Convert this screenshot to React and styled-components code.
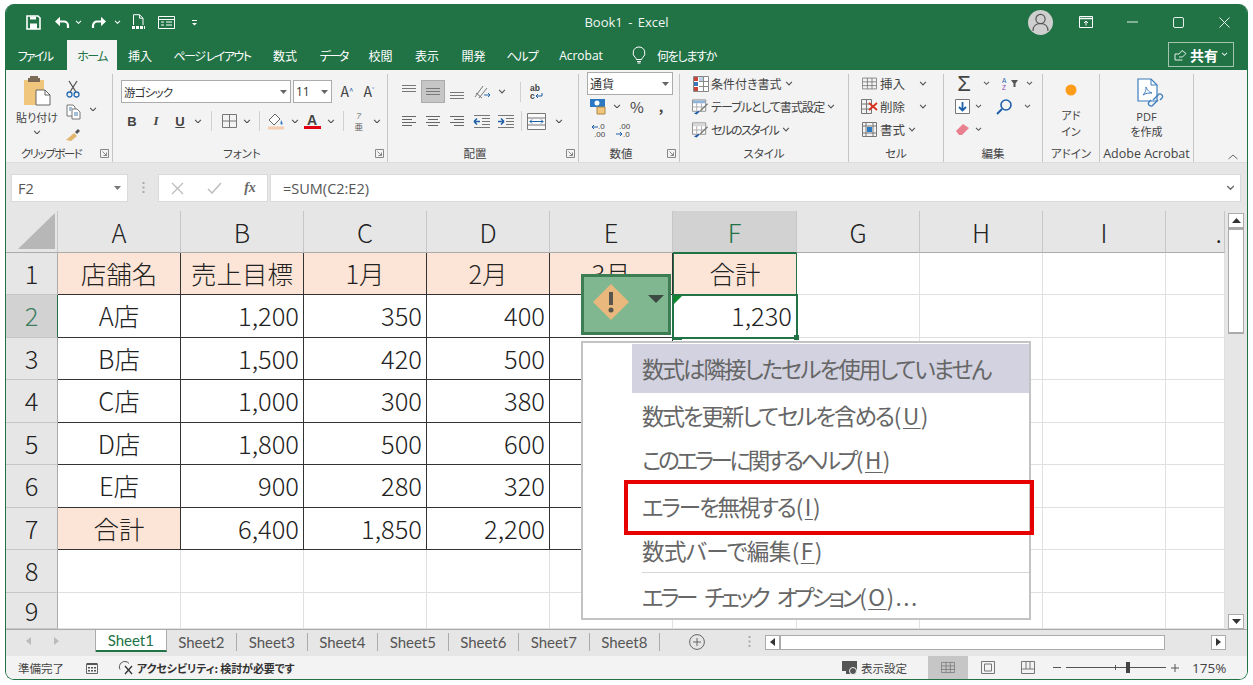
import React from "react";
import styled, { createGlobalStyle } from "styled-components";

const UI = `"Noto Sans CJK JP", "Noto Sans", sans-serif`;
const LATIN = `"Open Sans", "Noto Sans CJK JP", sans-serif`;

const Global = createGlobalStyle`
  html, body { margin: 0; padding: 0; background: #fff; }
  * { box-sizing: border-box; }
  body { font-family: ${UI}; font-feature-settings: "palt"; overflow: hidden; }
`;

const Window = styled.div`
  width: 1243px; height: 676px; margin: 4px 0 0 5px;
  border: 1px solid #217346; border-top: 0; border-radius: 9px;
  overflow: hidden; display: flex; flex-direction: column; background: #e6e6e6;
`;

/* ---- title bar ---- */
const TitleBar = styled.div`
  height: 36px; background: #217346; color: #fff; flex: none;
  display: grid; grid-template-columns: 1fr auto 1fr; align-items: center;
`;
const Qat = styled.div`display: flex; align-items: center; padding-left: 16px;`;
const Slot = styled.span`
  width: ${p => p.$w}px; flex: none; display: inline-flex; align-items: center; justify-content: center;
  height: ${p => p.$h || 22}px; margin-top: ${p => p.$mt || 0}px; margin-left: ${p => p.$ml || 0}px;
  color: ${p => p.$c || "#444"}; font-size: ${p => p.$fs || 13}px; font-weight: ${p => p.$fw || 400};
  background: ${p => p.$on ? "#c6c6c6" : "transparent"};
  border: ${p => p.$on ? "1px solid #ababab" : "0"};
`;
const DocTitle = styled.div`font: 400 13px ${LATIN}; color: #f0f6f2; word-spacing: 2px;`;
const WinCtrls = styled.div`display: flex; align-items: center; justify-content: flex-end;`;
const Avatar = styled.span`
  width: 25px; height: 25px; border-radius: 50%; background: #cfcfcf; display: flex;
  align-items: center; justify-content: center; margin-right: 10px;
`;

/* ---- tabs ---- */
const TabBar = styled.div`
  height: 30px; background: #217346; flex: none; display: flex; align-items: stretch; padding-left: 2px;
  position: relative;
`;
const Tab = styled.div`
  display: flex; align-items: center; justify-content: center; width: ${p => p.$w}px; flex: none;
  color: ${p => p.$on ? "#217346" : "#fff"}; background: ${p => p.$on ? "#f3f3f3" : "transparent"};
  font-size: 12px; margin-left: ${p => p.$ml || 0}px; letter-spacing: ${p => p.$ls || 0}px; white-space: nowrap;
  font-family: ${p => p.$latin ? LATIN : UI};
`;
const TellMe = styled.div`display: flex; align-items: center; color: #fff; font-size: 12px; gap: 11px; margin-left: 18px; letter-spacing: -1.3px;`;
const Share = styled.div`
  margin-left: auto; margin-right: 13px; margin-top: 2px; width: 66px; height: 25px;
  border: 1px solid #a3c4ae; display: flex; align-items: center; justify-content: center; gap: 3px;
  color: #fff; font-size: 14px; font-weight: 700;
`;

/* ---- ribbon ---- */
const Ribbon = styled.div`height: 92px; background: #f3f3f3; display: flex; flex: none; position: relative;`;
const Group = styled.div`
  width: ${p => p.$w}px; flex: none; height: 88px; margin-top: 4px;
  border-right: 1px solid #c6c6c6; display: flex; flex-direction: column;
`;
const GroupBody = styled.div`
  flex: 1; display: flex; flex-direction: column; margin-top: -4px; min-height: 0;
  padding: ${p => p.$pt || 0}px 0 0 ${p => p.$pl || 0}px; gap: ${p => p.$gap || 0}px;
`;
const GroupFoot = styled.div`
  height: 16px; display: flex; align-items: center; font-size: 11.5px; color: #444; flex: none;
  margin-bottom: 1px;
`;
const FootText = styled.span`
  flex: 1; text-align: center; white-space: nowrap; font-family: ${p => p.$latin ? LATIN : UI};
  letter-spacing: ${p => p.$ls || 0}px; font-size: ${p => p.$fs || 11.5}px;
`;
const Launcher = styled.span`width: 16px; flex: none; display: flex; justify-content: center;`;
const Row = styled.div`
  display: flex; align-items: center; height: ${p => p.$h || 23}px; flex: none; margin-left: ${p => p.$ml || 0}px;
`;
const Big = styled.div`
  display: flex; flex-direction: column; align-items: center; width: ${p => p.$w}px; font-size: 11px; color: #444;
  line-height: 16px; text-align: center; flex: none;
`;
const SmallCol = styled.div`display: flex; flex-direction: column; flex: none;`;
const Split = styled.div`display: flex; flex: 1;`;
const ComboBox = styled.div`
  width: ${p => p.$w}px; height: 23px; background: #fff; border: 1px solid #ababab; flex: none;
  display: flex; align-items: center; justify-content: space-between; padding: 0 3px 0 2px;
  margin-right: ${p => p.$mr || 0}px; color: #333; font-size: ${p => p.$fs || 11.5}px; letter-spacing: ${p => p.$ls || 0}px;
`;
const Sep = styled.span`width: 1px; height: ${p => p.$h || 20}px; background: #d0d0d0; flex: none; margin: 0 ${p => p.$m || 0}px;`;
const StyleText = styled.span`font-size: ${p => p.$fs || 12}px; color: #444; white-space: nowrap; margin-left: 2px; letter-spacing: ${p => p.$ls || 0}px;`;
const Collapse = styled.span`position: absolute; right: 9px; bottom: 2px; display: flex;`;

/* ---- formula bar ---- */
const FormulaBar = styled.div`
  height: 49px; flex: none; background: #e6e6e6; display: flex; align-items: flex-start;
  padding: 11px 6px 0 5px; border-top: 1px solid #dcdcdc;
`;
const NameBox = styled.div`
  width: 117px; height: 28px; background: #fff; border: 1px solid #dadada; display: flex; align-items: center;
  justify-content: space-between; padding: 0 6px; font: 400 14.5px ${LATIN}; color: #555;
`;
const Dots = styled.span`width: 30px; height: 28px; display: flex; align-items: center; justify-content: center; flex: none;`;
const FxBox = styled.div`
  width: 110px; height: 28px; background: #fff; border: 1px solid #dadada; display: flex; align-items: center;
  flex: none; margin-right: 2px;
`;
const FxText = styled.span`font: italic 700 14px "Liberation Serif", serif; color: #666;`;
const FormulaInput = styled.div`
  flex: 1; height: 28px; background: #fff; border: 1px solid #dadada; display: flex; align-items: center;
  justify-content: space-between; padding: 0 5px 0 12px; font: 400 14.5px ${LATIN}; color: #555;
`;

/* ---- sheet ---- */
const Sheet = styled.div`height: 419px; flex: none; display: flex; position: relative; background: #fff; border-bottom: 1px solid #ababab;`;
const CellGrid = styled.div`
  width: 1219px; flex: none; display: grid; overflow: hidden; background: #fff;
  grid-template-columns: 52px repeat(5, 123px) 124px repeat(3, 123px) 59px;
  grid-template-rows: 42px 42px 43px 42px 43px 42px 43px 42px 43px 36px;
  color: #222; font-size: 25.5px; font-weight: 300;
`;
const Corner = styled.div`
  background: #e6e6e6; border-right: 1px solid #c6c6c6; border-bottom: 1px solid #ababab;
  display: flex; align-items: flex-end; justify-content: flex-end; padding: 0 2px 3px 0;
`;
const ColHead = styled.div`
  background: ${p => p.$on ? "#d2d2d2" : "#e6e6e6"}; color: ${p => p.$on ? "#217346" : "#222"};
  border-right: 1px solid #c6c6c6; border-bottom: 1px ${p => p.$on ? "solid #217346" : "solid #ababab"};
  display: flex; align-items: center; justify-content: ${p => p.$end ? "flex-end" : "center"}; padding-right: ${p => p.$end ? 2 : 0}px;
`;
const RowHead = styled.div`
  background: ${p => p.$on ? "#d2d2d2" : "#e6e6e6"}; color: ${p => p.$on ? "#3f7f5f" : "#222"};
  border-right: 1px ${p => p.$on ? "solid #217346" : "solid #ababab"}; border-bottom: 1px solid #c6c6c6;
  display: flex; align-items: center; justify-content: center; padding-bottom: 3px;
`;
const Cell = styled.div`
  position: relative; display: flex; align-items: center; white-space: nowrap; padding-bottom: 3px;
  justify-content: ${p => p.$right ? "flex-end" : "center"}; padding-right: ${p => p.$right ? 4 : 0}px;
  background: ${p => p.$peach ? "#fce4d6" : "#fff"};
  border-right: 1px solid ${p => p.$dark ? "#333" : "#e0e0e0"};
  border-bottom: 1px solid ${p => p.$dark ? "#333" : "#e0e0e0"};
  ${p => p.$framed && "border: 1px solid #217346;"}
  ${p => p.$active && "outline: 2px solid #217346; outline-offset: -1px; z-index: 2;"}
`;
const ErrorMark = styled.span`
  position: absolute; left: 1px; top: 1px; width: 0; height: 0;
  border-top: 8px solid #108a2e; border-right: 8px solid transparent;
`;
const FillHandle = styled.span`
  position: absolute; right: -3px; bottom: -3px; width: 5px; height: 5px; background: #217346; border: 0;
`;
const AnchorMark = styled.span`
  position: absolute; left: -1px; bottom: -3px; width: 10px; height: 3px; background: #217346;
`;
const VScroll = styled.div`
  width: 22px; flex: none; background: #e6e6e6; display: flex; flex-direction: column; padding: 2px 3px 0 3px;
`;
const ScrollBtn = styled.div`
  width: ${p => p.$w || 16}px; height: ${p => p.$h || 15}px; background: #fff; border: 1px solid #ababab; flex: none;
  display: flex; align-items: center; justify-content: center; margin-top: ${p => p.$auto ? "auto" : 0};
  margin-left: ${p => p.$autoL ? "auto" : 0};
`;
const VThumb = styled.div`height: 106px; background: #fff; border: 1px solid #ababab; border-top-width: 2px; border-bottom-width: 2px; flex: none;`;

/* ---- overlays above the sheet ---- */
const SmartTag = styled.div`
  position: absolute; left: 575px; top: 63px; width: 90px; height: 61px; z-index: 5;
  background: #80b690; border: 3px solid #3c7d54; display: flex; align-items: center; padding: 0 0 6px 8px;
`;
const TagCaret = styled.span`
  margin-left: 18px; width: 0; height: 0; margin-top: -5px;
  border-left: 8px solid transparent; border-right: 8px solid transparent; border-top: 8px solid #3d4a42;
`;
const Menu = styled.div`
  position: absolute; left: 575px; top: 130px; width: 450px; height: 279px; z-index: 5; background: #fff;
  border: 2px solid #c3c3c3; padding-top: 1px; display: flex; flex-direction: column; color: #666;
  font-size: 22.5px; font-weight: 400;
`;
const MenuHead = styled.div`
  margin-left: 49px; height: 49px; background: #d2d2e0; display: flex; align-items: center; padding: 0 0 2px 10px; flex: none;
  letter-spacing: ${p => p.$ls || 0}px; white-space: nowrap;
`;
const MenuItem = styled.div`
  height: ${p => p.$h}px; margin-left: 59px; display: flex; align-items: center; flex: none; white-space: nowrap;
  letter-spacing: ${p => p.$ls || 0}px; padding-bottom: ${p => p.$pb || 0}px; word-spacing: ${p => p.$ws || 0}px;
`;
const MenuRule = styled.div`height: 1px; background: #d6d6d6; margin-left: 59px; flex: none;`;
const Access = styled.span`letter-spacing: 1.5px; margin-left: 1px;`;
const Key = styled.span`text-decoration: underline; text-underline-offset: 3px; text-decoration-thickness: 1px;`;
const RedBox = styled.div`
  position: absolute; left: 618px; top: 269px; width: 410px; height: 55px; border: 4px solid #e60000; z-index: 6;
`;

/* ---- sheet tabs ---- */
const TabsBar = styled.div`height: 26px; flex: none; background: #e6e6e6; display: flex; align-items: flex-start;`;
const SheetNav = styled.div`width: 90px; height: 22px; flex: none; display: flex; align-items: center; padding-left: 20px; gap: 23px; border-right: 1px solid #ababab;`;
const SheetTab = styled.div`
  width: 70.5px; height: ${p => p.$on ? 22 : 18}px; margin-top: ${p => p.$on ? 0 : 3}px; flex: none;
  display: flex; align-items: center; justify-content: center; font: 400 15px Lato, ${LATIN};
  color: ${p => p.$on ? "#217346" : "#555"}; background: ${p => p.$on ? "#fff" : "transparent"};
  border-right: 1px solid #ababab;
  border-bottom: ${p => p.$on ? "2px solid #217346" : "0"};
`;
const AddSheet = styled.span`width: 52px; height: 24px; flex: none; display: flex; align-items: center; justify-content: flex-end; padding-right: 7px;`;
const HDots = styled.span`width: 74px; height: 24px; flex: none; display: flex; align-items: center; justify-content: center;`;
const HScroll = styled.div`flex: 1; height: 24px; display: flex; align-items: center; padding: 0 21px 0 0; margin-left: -21px;`;
const HThumb = styled.div`width: 385px; height: 15px; background: #fff; border: 1px solid #ababab; flex: none;`;

/* ---- status bar ---- */
const StatusBar = styled.div`height: 23px; flex: 1; background: #f3f3f3; display: flex; align-items: center; padding-left: 12px; font-size: 11.5px; color: #444;`;
const A11y = styled.span`font-weight: 700; font-size: 11px; color: #333; margin-left: 3px; letter-spacing: -.1px;`;
const StatusRight = styled.div`margin-left: auto; display: flex; align-items: center; height: 100%; padding-right: 19px;`;
const SettingLabel = styled.span`margin: 0 21px 0 3px; font-size: 11.5px;`;
const ViewBtn = styled.span`
  width: 40px; height: 100%; display: flex; align-items: center; justify-content: center;
  background: ${p => p.$on ? "#c6c6c6" : "transparent"};
`;
const ZoomTrack = styled.span`width: 100px; height: 1px; background: #555; position: relative; display: block; margin: 0 4px;`;
const ZoomThumb = styled.span`position: absolute; left: 60px; top: -5px; width: 4px; height: 11px; background: #444;`;
const ZoomTick = styled.span`position: absolute; left: 49px; top: -2px; width: 1px; height: 5px; background: #555;`;
const Pct = styled.span`font: 400 13.5px ${LATIN}; color: #444; width: 36px; margin-left: 12px; white-space: nowrap;`;

/* ---- drawings ---- */
const Chev = ({ c = "#555", s = 8 }) => (
  <svg width={s} height={s * 0.6} viewBox="0 0 8 5"><path d="M1 1l3 3 3-3" stroke={c} strokeWidth="1.2" fill="none" /></svg>
);
const Launch = () => (
  <svg width="9" height="9" viewBox="0 0 9 9"><path d="M.5 8.500V.5h8v8z M2.500 2.500l4 4 M6.500 3.500v3h-3" stroke="#888" fill="none" /></svg>
);
const Lines = ({ kind = "center", c = "#666" }) => {
  const r = kind === "left" ? [[2, 16], [2, 12], [2, 16], [2, 12]] : kind === "right" ? [[2, 16], [6, 16], [2, 16], [6, 16]] : [[2, 16], [4, 14], [2, 16], [4, 14]];
  return <svg width="18" height="14" viewBox="0 0 18 14">{r.map((l, i) => <path key={i} d={`M${l[0]} ${2.5 + i * 3}H${l[1]}`} stroke={c} />)}</svg>;
};
const VLines = ({ y = 4 }) => (
  <svg width="18" height="16" viewBox="0 0 18 16">{[0, 1, 2].map(i => <path key={i} d={`M2 ${y + .5 + i * 3}H16`} stroke="#777" />)}</svg>
);
const Indent = ({ out }) => (
  <svg width="18" height="14" viewBox="0 0 18 14">
    <path d="M1 1.500H17M9 4.500H17M9 7.500H17M9 10.500H17M1 13.500H17" stroke="#777" />
    <path d={out ? "M1 7.500H7M1 7.500L4 4.500M1 7.500L4 10.500" : "M1 7.500H7M7 7.500L4 4.500M7 7.500L4 10.500"} stroke="#1f5fa8" strokeWidth="1.5" fill="none" />
  </svg>
);
const MiniGrid = ({ w = 18, h = 14, c = "#777" }) => (
  <svg width={w} height={h} viewBox="0 0 18 14"><path d="M.5.500h17v13H.5zM6.500.500v13M12 .500v13M.5 5h17M.5 9.500h17" stroke={c} fill="none" /></svg>
);
const CondFormat = () => (
  <svg width="16" height="16" viewBox="0 0 16 16"><path d="M.5.500h15v15H.5z" fill="#fff" stroke="#888" /><path d="M1 1h4v4H1z" fill="#c9453a" /><path d="M1 6h4v4H1z" fill="#3a78b8" /><path d="M1 11h4v4H1z" fill="#c9453a" /><path d="M6 1h4v4H6z" fill="#bcd3e8" /><path d="M6 5.500h9M6 10.500h9M10.500 1v14" stroke="#888" /></svg>
);
const TableFormat = ({ band }) => (
  <svg width="18" height="16" viewBox="0 0 18 16"><path d="M.5.500h14v12H.5z" fill="#fff" stroke="#888" /><path d="M1 1h13v3H1z" fill={band} /><path d="M.5 8h14M5 4v8M10 4v8" stroke="#aaa" /><path d="M17 5l-7 7-2 1 1-2 7-7z" fill="#7a7a7a" /><path d="M2 15l5-3 1 1-3 3z" fill="#1f5fa8" /></svg>
);
const Tiny = ({ w, h, children }) => (
  <svg width={w} height={h} viewBox={`0 0 ${w} ${h}`} overflow="visible" fontFamily="Liberation Sans" fontSize="8">{children}</svg>
);

/* ---- data ---- */
const LETTERS = ["A", "B", "C", "D", "E", "F", "G", "H", "I"];
const ROWS = [
  [["店舗名", 1], ["売上目標", 1], ["1月", 1], ["2月", 1], ["3月", 1]],
  [["A店"], ["1,200"], ["350"], ["400"], [""]],
  [["B店"], ["1,500"], ["420"], ["500"], [""]],
  [["C店"], ["1,000"], ["300"], ["380"], [""]],
  [["D店"], ["1,800"], ["500"], ["600"], [""]],
  [["E店"], ["900"], ["280"], ["320"], [""]],
  [["合計", 1], ["6,400"], ["1,850"], ["2,200"], [""]],
];
const TABS = [
  { t: "ファイル", w: 54, ls: -1.7 }, { t: "ホーム", w: 50, ml: 5, ls: -1.6, on: 1 }, { t: "挿入", w: 46 },
  { t: "ページ レイアウト", w: 98, ls: -1.5 }, { t: "数式", w: 48 }, { t: "データ", w: 49, ls: -2 },
  { t: "校閲", w: 45 }, { t: "表示", w: 48 }, { t: "開発", w: 45 }, { t: "ヘルプ", w: 52, ls: -1 },
];
const SHEETS = ["Sheet1", "Sheet2", "Sheet3", "Sheet4", "Sheet5", "Sheet6", "Sheet7", "Sheet8"];

export default function App() {
  return (
    <>
      <Global />
      <Window>
        <TitleBar>
          <Qat>
            <Slot $w={22}><svg width="15" height="15" viewBox="0 0 15 15"><path d="M1 1h11l2 2v11H1z" fill="none" stroke="#fff" strokeWidth="1.6" /><path d="M4 1.500h6v3H4z" fill="#fff" /><path d="M4 8.500h7v5.500H4z" fill="#fff" /></svg></Slot>
            <Slot $w={24} $ml={6}><svg width="16" height="13" viewBox="0 0 16 13"><path d="M3 5.500h7a4 4 0 0 1 4 4V12" stroke="#fff" strokeWidth="2.2" fill="none" /><path d="M6 .8L1 5.500l5 4.700z" fill="#fff" /></svg></Slot>
            <Slot $w={8}><Chev c="#fff" s={7} /></Slot>
            <Slot $w={24} $ml={5}><svg width="16" height="13" viewBox="0 0 16 13"><path d="M13 5.500H6a4 4 0 0 0-4 4V12" stroke="#fff" strokeWidth="2.2" fill="none" /><path d="M10 .8l5 4.700-5 4.700z" fill="#fff" /></svg></Slot>
            <Slot $w={12}><Chev c="#fff" s={7} /></Slot>
            <Slot $w={24} $ml={3}><svg width="15" height="16" viewBox="0 0 15 16"><path d="M2.500 11V.7h6l3.500 3.500V11M8.500.7v3.500H12" stroke="#fff" fill="none" /><path d="M1 13.500h13" stroke="#fff" strokeWidth="3" strokeDasharray="3 1" /></svg></Slot>
            <Slot $w={28} $ml={2}><svg width="17" height="13" viewBox="0 0 17 13"><path d="M.5.500h16v12H.5zM.5 3.500h16M3 6h3M3 9h3M8 6h6M8 9h6" stroke="#fff" fill="none" /></svg></Slot>
            <Slot $w={28}><svg width="7" height="7" viewBox="0 0 7 7"><path d="M1 1.500h5" stroke="#fff" /><path d="M1 4h5L3.500 6.500z" fill="#fff" /></svg></Slot>
          </Qat>
          <DocTitle>Book1 - Excel</DocTitle>
          <WinCtrls>
            <Avatar><svg width="17" height="19" viewBox="0 0 17 19"><circle cx="8.500" cy="6" r="4.600" fill="none" stroke="#555" strokeWidth="1.2" /><path d="M1 18c0-5 3-7.500 7.500-7.500S16 13 16 18" fill="none" stroke="#555" strokeWidth="1.2" /></svg></Avatar>
            <Slot $w={46}><svg width="14" height="12" viewBox="0 0 14 12"><path d="M.5.500h13v11H.5z" fill="none" stroke="#fff" /><path d="M.5 2.500h13" stroke="#fff" strokeWidth="1.5" /><path d="M7 9.500V5M5 7l2-2 2 2" fill="none" stroke="#fff" /></svg></Slot>
            <Slot $w={46}><svg width="11" height="2" viewBox="0 0 11 2"><path d="M0 1h11" stroke="#e6f0ea" /></svg></Slot>
            <Slot $w={46}><svg width="11" height="11" viewBox="0 0 11 11"><rect x=".5" y=".5" width="10" height="10" rx="1.5" fill="none" stroke="#e6f0ea" /></svg></Slot>
            <Slot $w={46}><svg width="11" height="11" viewBox="0 0 11 11"><path d="M.5.500l10 10M10.500.500l-10 10" stroke="#e6f0ea" /></svg></Slot>
          </WinCtrls>
        </TitleBar>

        <TabBar>
          {TABS.map(({ t, w, ml, ls, on }) => <Tab key={t} $w={w} $ml={ml} $ls={ls} $on={on}>{t}</Tab>)}
          <Tab $w={66} $latin>Acrobat</Tab>
          <TellMe>
            <svg width="14" height="18" viewBox="0 0 14 18"><path d="M7 1a6 6 0 0 0-3.500 10.800c.6.500.8 1.200.8 1.700h5.400c0-.5.200-1.200.8-1.700A6 6 0 0 0 7 1zM5 15.500h4M5.500 17h3" fill="none" stroke="#fff" /></svg>
            <span>何をしますか</span>
          </TellMe>
          <Share>
            <svg width="13" height="12" viewBox="0 0 13 12"><path d="M1 11V5h4l3-3.500 4 3L8.500 8H5M1 11h7.500" fill="none" stroke="#dfeee5" /></svg>
            <span>共有</span>
            <Chev c="#dfeee5" s={7} />
          </Share>
        </TabBar>

        <Ribbon>
          <Group $w={107}>
            <GroupBody $pt={5} $pl={8}>
              <Split>
                <Big $w={46}>
                  <svg width="28" height="31" viewBox="0 0 28 31"><path d="M1 5h20v25H1z" fill="#f0c67c" /><path d="M7 3h8V1h-8zM5 3h12v4H5z" fill="#7b6a55" /><path d="M13 15h9l5 5v10H13z" fill="#fff" stroke="#666" /><path d="M22 15v5h5" fill="none" stroke="#666" /></svg>
                  <span style={{ marginTop: 3 }}>貼り付け</span>
                  <Slot $w={12} $h={14}><Chev /></Slot>
                </Big>
                <SmallCol>
                  <Slot $w={26} $h={24} $mt={2}><svg width="14" height="18" viewBox="0 0 14 18"><path d="M3 1l7 11M11 1L4 12" stroke="#555" strokeWidth="1.3" /><circle cx="3.500" cy="14.500" r="2.500" fill="none" stroke="#2a6db0" strokeWidth="1.3" /><circle cx="10.500" cy="14.500" r="2.500" fill="none" stroke="#2a6db0" strokeWidth="1.3" /></svg></Slot>
                  <Slot $w={26} $h={22}><svg width="15" height="16" viewBox="0 0 15 16"><path d="M1 1h6l2 2v9H1z" fill="#fff" stroke="#777" /><path d="M6 5h5l3 3v7H6z" fill="#fff" stroke="#777" /><path d="M8 9h4M8 11h4M3 4h3M3 6h2" stroke="#4a7db0" /></svg></Slot>
                  <Slot $w={26} $h={22}><svg width="17" height="15" viewBox="0 0 17 15"><path d="M1 13L9 6l3 3-6 5z" fill="#e2b56c" /><path d="M10 5l3-3 2 2-3 3z" fill="#555" /></svg></Slot>
                </SmallCol>
                <Slot $w={14} $h={20} $mt={24}><Chev /></Slot>
              </Split>
            </GroupBody>
            <GroupFoot><FootText $ls={-1.5}>クリップボード</FootText><Launcher><Launch /></Launcher></GroupFoot>
          </Group>

          <Group $w={275}>
            <GroupBody $pt={10} $pl={8} $gap={7}>
              <Row $h={23}>
                <ComboBox $w={170} $mr={2} $ls={-0.8}><span>游ゴシック</span><svg width="7" height="4" viewBox="0 0 7 4"><path d="M0 0h7L3.500 4z" fill="#666" /></svg></ComboBox>
                <ComboBox $w={39} $fs={12}><span style={{ fontFamily: LATIN }}>11</span><svg width="7" height="4" viewBox="0 0 7 4"><path d="M0 0h7L3.500 4z" fill="#666" /></svg></ComboBox>
                <Slot $w={30} $fs={14} $mt={-2}>A<sup style={{ fontSize: 8, color: "#1f5fa8" }}>^</sup></Slot>
                <Slot $w={14} $fs={14} $mt={-2}>A<sup style={{ fontSize: 8, color: "#1f5fa8" }}>˅</sup></Slot>
              </Row>
              <Row $h={22} $ml={-1}>
                <Slot $w={24} $fs={13} $fw={700} $c="#444" style={{ fontFamily: "'Liberation Sans'" }}>B</Slot>
                <Slot $w={24} $fs={13} $fw={700} style={{ fontFamily: "'Liberation Serif'", fontStyle: "italic" }}>I</Slot>
                <Slot $w={24} $fs={13} $fw={700} style={{ fontFamily: "'Liberation Sans'", textDecoration: "underline" }}>U</Slot>
                <Slot $w={12}><Chev /></Slot>
                <Sep $m={7} />
                <Slot $w={20}><svg width="15" height="14" viewBox="0 0 15 14"><path d="M.5.500h14v13H.5zM7.500.500v13M.5 7h14" stroke="#777" fill="none" /></svg></Slot>
                <Slot $w={16}><Chev /></Slot>
                <Sep $m={4} />
                <Slot $w={24}><svg width="18" height="18" viewBox="0 0 18 18"><path d="M8 2L2 8l5 5 6-6z" fill="#fff" stroke="#666" /><path d="M14 8c1 2 2 3 1.500 4s-2 .5-2-.5.5-2.500.5-3.500z" fill="#2a79c2" /><path d="M1 16h16" stroke="#f6cdb0" strokeWidth="3" /></svg></Slot>
                <Slot $w={14}><Chev /></Slot>
                <Slot $w={20} $h={20} $fs={14} $fw={700} style={{ flexDirection: "column", lineHeight: "12px", fontFamily: "'Liberation Sans'" }}>A<svg width="17" height="3" viewBox="0 0 17 3"><path d="M0 1.500h17" stroke="#e00012" strokeWidth="3" /></svg></Slot>
                <Slot $w={18}><Chev /></Slot>
                <Sep $m={3} />
                <Slot $w={24}>
                  <Tiny w={14} h={19}><text x="4.500" y="6" fontSize="5.500" fill="#555" fontFamily="Noto Sans CJK JP">ア</text><text x="2.500" y="18" fontSize="8.500" fill="#555" fontFamily="Noto Sans CJK JP">亜</text></Tiny>
                </Slot>
                <Slot $w={12}><Chev /></Slot>
              </Row>
            </GroupBody>
            <GroupFoot><FootText>フォント</FootText><Launcher><Launch /></Launcher></GroupFoot>
          </Group>

          <Group $w={191}>
            <GroupBody $pt={10} $pl={9} $gap={7}>
              <Row $h={23}>
                <Slot $w={24}><VLines y={1} /></Slot>
                <Slot $w={24} $h={23} $on><VLines y={4} /></Slot>
                <Slot $w={24} $mt={2}><VLines y={7} /></Slot>
                <Slot $w={26}><svg width="18" height="16" viewBox="0 0 18 16"><path d="M2 13L10 2M6 14l8-10" stroke="#777" /><path d="M3 9l6 5" stroke="#777" /><path d="M11 11h6M15 9l2 2-2 2" stroke="#2a6db0" fill="none" /></svg></Slot>
                <Slot $w={14}><Chev /></Slot>
                <Sep $m={11} />
                <Slot $w={22} $ml={-7}>
                  <Tiny w={16} h={16}><text x="2" y="7" fontWeight="700" fill="#444" fontSize="8.500">ab</text><text x="2" y="15" fontWeight="700" fill="#444" fontSize="8.500">c</text><path d="M14 9v3H8M10 10l-2 2 2 2" fill="none" stroke="#1f5fa8" /></Tiny>
                </Slot>
              </Row>
              <Row $h={22}>
                <Slot $w={24}><Lines kind="left" /></Slot>
                <Slot $w={24}><Lines /></Slot>
                <Slot $w={24}><Lines kind="right" /></Slot>
                <Slot $w={25}><Indent out /></Slot>
                <Slot $w={24}><Indent /></Slot>
                <Sep $m={3} />
                <Slot $w={22}><svg width="19" height="17" viewBox="0 0 19 17"><path d="M.5.500h18v16H.5zM.5 5h18M.5 12h18" stroke="#777" fill="#fafafa" /><path d="M3 8.500h13M3 8.500l2-2M3 8.500l2 2M16 8.500l-2-2M16 8.500l-2 2" stroke="#1f5fa8" fill="none" /></svg></Slot>
                <Slot $w={24}><Chev /></Slot>
              </Row>
            </GroupBody>
            <GroupFoot><FootText>配置</FootText><Launcher><Launch /></Launcher></GroupFoot>
          </Group>

          <Group $w={101}>
            <GroupBody $pt={2} $pl={8}>
              <ComboBox $w={86} $fs={12}><span>通貨</span><svg width="7" height="4" viewBox="0 0 7 4"><path d="M0 0h7L3.500 4z" fill="#666" /></svg></ComboBox>
              <Row $h={22}>
                <Slot $w={22}><svg width="18" height="17" viewBox="0 0 18 17"><path d="M1 1h15v8H1z" fill="#2a79c2" /><circle cx="8" cy="5" r="2.500" fill="#fff" /><path d="M8 9h8v7H8z" fill="#f0c67c" stroke="#a98544" /></svg></Slot>
                <Slot $w={15}><Chev /></Slot>
                <Slot $w={26} $fs={15}>%</Slot>
                <Slot $w={22} $fs={14} $fw={700}>,</Slot>
              </Row>
              <Row $h={26} $ml={2}>
                <Slot $w={22}><Tiny w={18} h={16}><text x="7" y="7" fill="#444">.0</text><text x="3" y="15" fill="#444">.00</text><path d="M1 5h6M1 5l2-2M1 5l2 2" fill="none" stroke="#1f5fa8" /></Tiny></Slot>
                <Slot $w={24}><Tiny w={18} h={16}><text x="5" y="7" fill="#444">.00</text><text x="9" y="15" fill="#444">.0</text><path d="M2 12h6M8 12l-2-2M8 12l-2 2" fill="none" stroke="#1f5fa8" /></Tiny></Slot>
              </Row>
            </GroupBody>
            <GroupFoot><FootText>数値</FootText><Launcher><Launch /></Launcher></GroupFoot>
          </Group>

          <Group $w={169}>
            <GroupBody $pt={2} $pl={12}>
              <Row><Slot $w={17}><CondFormat /></Slot><StyleText>条件付き書式</StyleText><Slot $w={14}><Chev /></Slot></Row>
              <Row><Slot $w={17}><TableFormat band="#8fb4d9" /></Slot><StyleText $ls={-0.9}>テーブルとして書式設定</StyleText><Slot $w={14}><Chev /></Slot></Row>
              <Row><Slot $w={17}><TableFormat band="#d8d8d8" /></Slot><StyleText $ls={-1.4}>セルのスタイル</StyleText><Slot $w={14}><Chev /></Slot></Row>
            </GroupBody>
            <GroupFoot><FootText>スタイル</FootText></GroupFoot>
          </Group>

          <Group $w={95}>
            <GroupBody $pt={2} $pl={11}>
              <Row><Slot $w={18}><MiniGrid w={15} h={15} /></Slot><StyleText $fs={12.5}>挿入</StyleText><Slot $w={22} style={{ justifyContent: "flex-end" }}><Chev /></Slot></Row>
              <Row><Slot $w={18}><svg width="17" height="15" viewBox="0 0 17 15"><path d="M.5.500h10v14H.5zM.5 5h10M.5 10h10M5.500.500v14" stroke="#777" fill="none" /><path d="M8 4l8 7M16 4l-8 7" stroke="#d8321f" strokeWidth="1.800" /></svg></Slot><StyleText $fs={12.5}>削除</StyleText><Slot $w={22} style={{ justifyContent: "flex-end" }}><Chev /></Slot></Row>
              <Row><Slot $w={18}><svg width="15" height="15" viewBox="0 0 15 15"><path d="M.5.500h14v14H.5zM.5 4h14M.5 11h14M4 .500v14M11 .500v14" stroke="#777" fill="none" /><path d="M5 5h5v5H5z" fill="#2a79c2" /></svg></Slot><StyleText $fs={12.5}>書式</StyleText><Slot $w={14}><Chev /></Slot></Row>
            </GroupBody>
            <GroupFoot><FootText>セル</FootText></GroupFoot>
          </Group>

          <Group $w={99}>
            <GroupBody $pt={2} $pl={9}>
              <Row>
                <Slot $w={22} $fs={22} $c="#444" style={{ fontFamily: "'Liberation Sans'" }}>Σ</Slot>
                <Slot $w={22}><Chev s={7} /></Slot>
                <Slot $w={26}><svg width="17" height="13" viewBox="0 0 17 13"><text x="0" y="6" fontSize="6.500" fill="#1f5fa8" fontFamily="Liberation Sans">A</text><text x="0" y="13" fontSize="6.500" fill="#8a3fa8" fontFamily="Liberation Sans">Z</text><path d="M9 3h7l-2.500 3.500V10h-2V6.500z" fill="#555" /></svg></Slot>
                <Slot $w={12}><Chev s={7} /></Slot>
              </Row>
              <Row>
                <Slot $w={18}><svg width="15" height="15" viewBox="0 0 15 15"><path d="M.5.500h14v14H.5z" fill="#fff" stroke="#777" /><path d="M7.500 3v8M4 8l3.500 3.500L11 8" stroke="#1f5fa8" strokeWidth="1.800" fill="none" /></svg></Slot>
                <Slot $w={14}><Chev s={7} /></Slot>
                <Slot $w={38}><svg width="16" height="16" viewBox="0 0 16 16"><circle cx="10" cy="6" r="5" fill="none" stroke="#1f5fa8" strokeWidth="1.600" /><path d="M6 10l-5 5" stroke="#1f5fa8" strokeWidth="2" /></svg></Slot>
                <Slot $w={8}><Chev s={7} /></Slot>
              </Row>
              <Row>
                <Slot $w={18}><svg width="15" height="13" viewBox="0 0 15 13"><path d="M1 8l7-7 6 4-7 7H4z" fill="#e8808e" /></svg></Slot>
                <Slot $w={14}><Chev s={7} /></Slot>
              </Row>
            </GroupBody>
            <GroupFoot><FootText>編集</FootText></GroupFoot>
          </Group>

          <Group $w={57}>
            <GroupBody $pt={14}>
              <Big $w={56}>
                <svg width="12" height="12" viewBox="0 0 12 12"><circle cx="6" cy="6" r="5.500" fill="#ff9c1a" /></svg>
                <span style={{ marginTop: 11 }}>アド</span>
                <span>イン</span>
              </Big>
            </GroupBody>
            <GroupFoot><FootText>アドイン</FootText></GroupFoot>
          </Group>

          <Group $w={94}>
            <GroupBody $pt={8}>
              <Big $w={93}>
                <svg width="30" height="30" viewBox="0 0 30 30" style={{ marginLeft: 4 }}><path d="M4 1h13l6 6v16H4z" fill="#fff" stroke="#3c7dbc" strokeWidth="1.200" /><path d="M17 1v6h6" fill="none" stroke="#3c7dbc" /><path d="M9 17c3-3 3-6 3-8 2 4 3 5 6 6-3 0-6 0-9 2z" fill="none" stroke="#3c7dbc" /><path d="M19 22l5-5a2.500 2.500 0 0 1 4 3l-2 2M24 22l-5 5a2.500 2.500 0 0 1-4-3l2-2" fill="none" stroke="#3c7dbc" strokeWidth="1.300" /></svg>
                <span style={{ marginTop: 1, fontFamily: LATIN, lineHeight: "15px" }}>PDF</span>
                <span style={{ lineHeight: "15px" }}>を作成</span>
              </Big>
            </GroupBody>
            <GroupFoot><FootText $latin $fs={12.5}>Adobe Acrobat</FootText></GroupFoot>
          </Group>
          <Collapse><svg width="10" height="6" viewBox="0 0 10 6"><path d="M.5 5L5 1l4.500 4" stroke="#666" fill="none" /></svg></Collapse>
        </Ribbon>

        <FormulaBar>
          <NameBox><span>F2</span><svg width="7" height="4" viewBox="0 0 7 4"><path d="M0 0h7L3.500 4z" fill="#777" /></svg></NameBox>
          <Dots><svg width="3" height="13" viewBox="0 0 3 13"><path d="M1.500 0v13" stroke="#aaa" strokeWidth="2" strokeDasharray="2 2.500" /></svg></Dots>
          <FxBox>
            <Slot $w={37}><svg width="13" height="13" viewBox="0 0 13 13"><path d="M1 1l11 11M12 1L1 12" stroke="#bdbdbd" strokeWidth="1.300" /></svg></Slot>
            <Slot $w={37}><svg width="15" height="12" viewBox="0 0 15 12"><path d="M1 7l4 4 9-10" stroke="#bdbdbd" strokeWidth="1.500" fill="none" /></svg></Slot>
            <Slot $w={34}><FxText>fx</FxText></Slot>
          </FxBox>
          <FormulaInput><span>=SUM(C2:E2)</span><Chev c="#666" s={9} /></FormulaInput>
        </FormulaBar>

        <Sheet>
          <CellGrid>
            <Corner><svg width="37" height="36" viewBox="0 0 37 36"><path d="M37 0v36H0z" fill="#b7b7b7" /></svg></Corner>
            {LETTERS.map(l => <ColHead key={l} $on={l === "F"}>{l}</ColHead>)}
            <ColHead $end>.</ColHead>
            {ROWS.map((cells, i) => (
              <React.Fragment key={i}>
                <RowHead $on={i === 1}>{i + 1}</RowHead>
                {cells.map(([v, peach], j) => (
                  <Cell key={j} $dark $peach={peach} $right={j > 0 && !peach}>{v}</Cell>
                ))}
                {i === 0 && <Cell $framed $peach>合計</Cell>}
                {i === 1 && <Cell $active $right><ErrorMark /><AnchorMark /><FillHandle />1,230</Cell>}
                {i > 1 && <Cell />}
                <Cell /><Cell /><Cell /><Cell />
              </React.Fragment>
            ))}
            {[8, 9].map(n => (
              <React.Fragment key={n}>
                <RowHead>{n}</RowHead>
                {Array.from({ length: 10 }, (_, j) => <Cell key={j} />)}
              </React.Fragment>
            ))}
          </CellGrid>
          <VScroll>
            <ScrollBtn><svg width="9" height="5" viewBox="0 0 9 5"><path d="M4.500 0L9 5H0z" fill="#333" /></svg></ScrollBtn>
            <VThumb />
            <ScrollBtn $auto><svg width="9" height="5" viewBox="0 0 9 5"><path d="M4.500 5L9 0H0z" fill="#333" /></svg></ScrollBtn>
          </VScroll>

          <SmartTag>
            <svg width="38" height="38" viewBox="0 0 38 38"><path d="M19 1l18 18-18 18L1 19z" fill="#e8b87c" /><path d="M17 9h4v13h-4z" fill="#57554e" /><circle cx="19" cy="27" r="2.500" fill="#57554e" /></svg>
            <TagCaret />
          </SmartTag>
          <Menu>
            <MenuHead $ls={-2}>数式は隣接したセルを使用していません</MenuHead>
            <MenuItem $h={43} $ls={-2.1}><span>数式を更新してセルを含める<Access>(<Key>U</Key>)</Access></span></MenuItem>
            <MenuItem $h={45} $ls={-3.4}><span>このエラーに関するヘルプ<Access>(<Key>H</Key>)</Access></span></MenuItem>
            <MenuItem $h={49} $ls={-2.1}><span>エラーを無視する<Access>(<Key>I</Key>)</Access></span></MenuItem>
            <MenuItem $h={42} $pb={3} $ls={-0.6}><span>数式バーで編集<Access>(<Key>F</Key>)</Access></span></MenuItem>
            <MenuRule />
            <MenuItem $h={45} $ls={-3.5} $ws={8}><span>エラー チェック オプション<Access>(<Key>O</Key>)...</Access></span></MenuItem>
          </Menu>
          <RedBox />
        </Sheet>

        <TabsBar>
          <SheetNav>
            <svg width="5" height="8" viewBox="0 0 5 8"><path d="M5 0v8L0 4z" fill="#bbb" /></svg>
            <svg width="5" height="8" viewBox="0 0 5 8"><path d="M0 0v8l5-4z" fill="#bbb" /></svg>
          </SheetNav>
          {SHEETS.map((s, i) => <SheetTab key={s} $on={i === 0}>{s}</SheetTab>)}
          <AddSheet><svg width="16" height="16" viewBox="0 0 16 16"><circle cx="8" cy="8" r="7.400" fill="none" stroke="#666" /><path d="M8 4v8M4 8h8" stroke="#666" /></svg></AddSheet>
          <HDots><svg width="3" height="13" viewBox="0 0 3 13"><path d="M1.500 0v13" stroke="#aaa" strokeWidth="2" strokeDasharray="2 2.500" /></svg></HDots>
          <HScroll>
            <ScrollBtn $w={15}><svg width="5" height="8" viewBox="0 0 5 8"><path d="M5 0v8L0 4z" fill="#333" /></svg></ScrollBtn>
            <HThumb />
            <ScrollBtn $w={15} $autoL><svg width="5" height="8" viewBox="0 0 5 8"><path d="M0 0v8l5-4z" fill="#333" /></svg></ScrollBtn>
          </HScroll>
        </TabsBar>

        <StatusBar>
          <span>準備完了</span>
          <Slot $w={14} $ml={21}><svg width="12" height="12" viewBox="0 0 12 12"><path d="M.5 2.500h11v9H.5z" fill="none" stroke="#666" /><path d="M.5 1h11v2H.5zM2 5h2v1.500H2zM5 5h2v1.500H5zM8 5h2v1.500H8zM2 8h2v1.500H2zM5 8h2v1.500H5zM8 8h2v1.500H8z" fill="#555" /></svg></Slot>
          <Slot $w={18} $ml={17}><svg width="17" height="15" viewBox="0 0 17 15"><path d="M8 1.500a5.500 5.500 0 0 0-5 8M8 1.500a5 5 0 0 1 4 2" fill="none" stroke="#555" /><path d="M8 6l7 8M15 6l-7 8" stroke="#333" strokeWidth="1.300" /></svg></Slot>
          <A11y>アクセシビリティ: 検討が必要です</A11y>
          <StatusRight>
            <Slot $w={16}><svg width="16" height="14" viewBox="0 0 16 14"><path d="M0 0h15v10H8v3H4v-3H0z" fill="#555" /><circle cx="11" cy="10" r="3.500" fill="#555" stroke="#f3f3f3" /></svg></Slot>
            <SettingLabel>表示設定</SettingLabel>
            <ViewBtn $on><MiniGrid w={14} h={13} /></ViewBtn>
            <ViewBtn><svg width="14" height="13" viewBox="0 0 14 13"><path d="M.5.500h13v12H.5zM3.500 3h7v7h-7z" fill="none" stroke="#777" /></svg></ViewBtn>
            <ViewBtn><svg width="14" height="13" viewBox="0 0 14 13"><path d="M.5.500h13v12H.5zM.5 8h13M5 .500V8M9 .500V8" fill="none" stroke="#777" /></svg></ViewBtn>
            <Slot $w={10} $ml={4}><svg width="8" height="1" viewBox="0 0 8 1"><path d="M0 .5h8" stroke="#555" /></svg></Slot>
            <ZoomTrack><ZoomTick /><ZoomThumb /></ZoomTrack>
            <Slot $w={10}><svg width="8" height="8" viewBox="0 0 8 8"><path d="M0 4h8M4 0v8" stroke="#555" /></svg></Slot>
            <Pct>175%</Pct>
          </StatusRight>
        </StatusBar>
      </Window>
    </>
  );
}
